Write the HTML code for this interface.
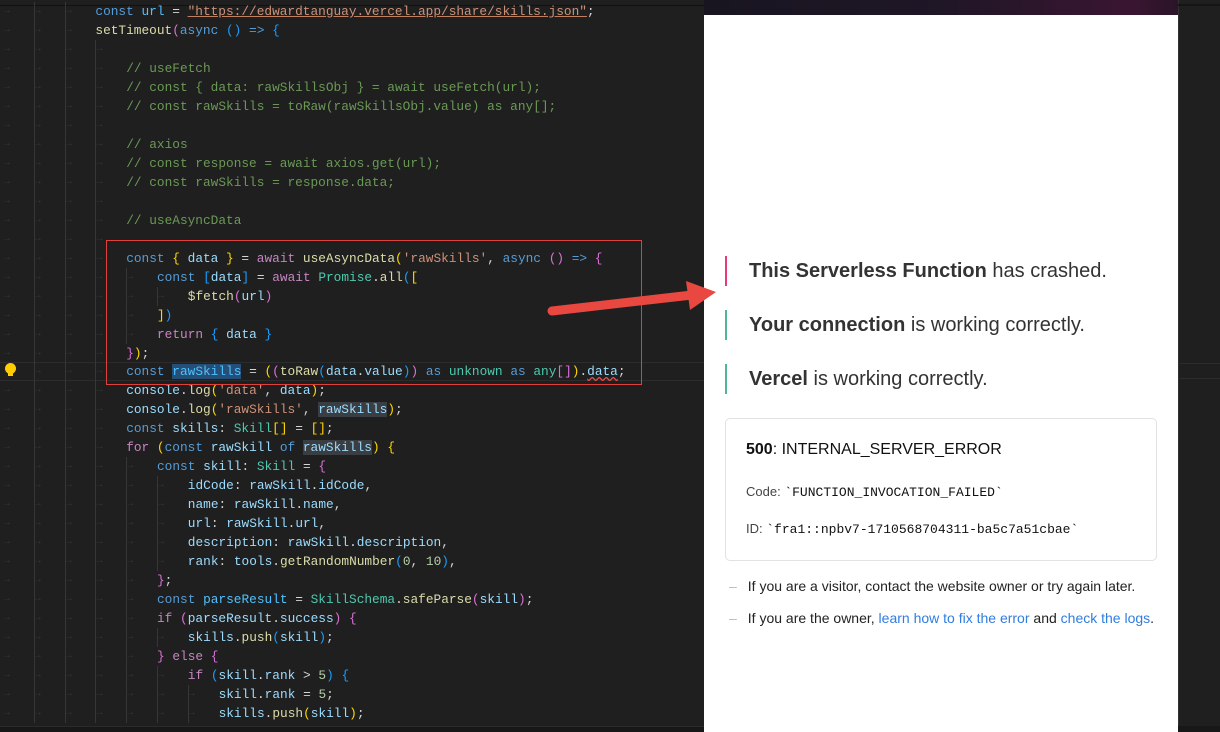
<!DOCTYPE html>
<html><head><meta charset="utf-8"><style>
*{margin:0;padding:0;box-sizing:border-box}
body{width:1220px;height:732px;overflow:hidden;background:#1f1f1f;position:relative;font-family:"Liberation Sans",sans-serif}
#ed{position:absolute;left:0;top:0;width:704px;height:732px;background:#1f1f1f;overflow:hidden}
.l{position:absolute;left:3px;height:19px;line-height:19px;white-space:pre;font-family:"Liberation Mono",monospace;font-size:12.8px;color:#9cdcfe}
.l b{display:inline-block;width:30.8px;height:19px;vertical-align:top;font-weight:normal;color:#363636;font-size:10px;padding-left:1px}
.l b::before{content:"→"}
.l b+b{box-shadow:inset 1px 0 #363636}
.k{color:#569cd6}.f{color:#dcdcaa}.s{color:#ce9178}.c{color:#6a9955}.p{color:#c586c0}.t{color:#4ec9b0}.n{color:#b5cea8}.w{color:#d4d4d4}
.y{color:#ffd700}.m{color:#da70d6}.bl{color:#179fff}
.hl{background:#264f78}.hg{background:#3a3d41}
#br{position:absolute;left:704px;top:0;width:474px;height:732px;background:#fff}
#bar{position:absolute;left:0;top:0;width:474px;height:15px;background:linear-gradient(90deg,#181520,#1f1626 50%,#3a1532 90%,#2a1428)}
.msg{position:absolute;left:21px;height:30px;border-left:2px solid #50b59a;padding-left:22px;font-size:20px;line-height:30px;color:#333}
.box{position:absolute;left:21px;top:418px;width:432px;height:143px;border:1px solid #e2e2e2;border-radius:5px}
.mono{font-family:"Liberation Mono",monospace;font-size:13px;color:#111}
.li{position:absolute;left:25px;font-size:14px;color:#222}
.li i{font-style:normal;color:#bbb;margin-right:11px}
a{color:#2f7de1;text-decoration:none}
</style></head><body>
<div id="ed">
<div class="l" style="top:-17px"><b></b><span class="p">return</span> <span class="k">new</span> <span class="t">Promise</span>&lt;<span class="t">Skill</span>[]&gt;((<span>resolve</span>, <span>reject</span>) <span class="k">=&gt;</span> {</div>
<div style="position:absolute;left:0;top:5px;width:704px;height:1px;background:#111"></div>
<div class="l" style="top:2px"><b></b><b></b><b></b><span class="k">const</span> <span style="color:#4fc1ff">url</span> <span class="w">=</span> <span class="s" style="text-decoration:underline;text-decoration-color:#c08060">"https://edwardtanguay.vercel.app/share/skills.json"</span><span class="w">;</span></div>
<div class="l" style="top:21px"><b></b><b></b><b></b><span class="f">setTimeout</span><span class="m">(</span><span class="k">async</span> <span class="bl">()</span> <span class="k">=&gt;</span> <span class="bl">{</span></div>
<div class="l" style="top:40px"><b></b><b></b><b></b><b style="width:1px"></b></div>
<div class="l" style="top:59px"><b></b><b></b><b></b><b></b><span class="c">// useFetch</span></div>
<div class="l" style="top:78px"><b></b><b></b><b></b><b></b><span class="c">// const { data: rawSkillsObj } = await useFetch(url);</span></div>
<div class="l" style="top:97px"><b></b><b></b><b></b><b></b><span class="c">// const rawSkills = toRaw(rawSkillsObj.value) as any[];</span></div>
<div class="l" style="top:116px"><b></b><b></b><b></b><b style="width:1px"></b></div>
<div class="l" style="top:135px"><b></b><b></b><b></b><b></b><span class="c">// axios</span></div>
<div class="l" style="top:154px"><b></b><b></b><b></b><b></b><span class="c">// const response = await axios.get(url);</span></div>
<div class="l" style="top:173px"><b></b><b></b><b></b><b></b><span class="c">// const rawSkills = response.data;</span></div>
<div class="l" style="top:192px"><b></b><b></b><b></b><b style="width:1px"></b></div>
<div class="l" style="top:211px"><b></b><b></b><b></b><b></b><span class="c">// useAsyncData</span></div>
<div class="l" style="top:230px"><b></b><b></b><b></b><b style="width:1px"></b></div>
<div class="l" style="top:249px"><b></b><b></b><b></b><b></b><span class="k">const</span> <span class="y">{</span> data <span class="y">}</span> <span class="w">=</span> <span class="p">await</span> <span class="f">useAsyncData</span><span class="y">(</span><span class="s">'rawSkills'</span><span class="w">,</span> <span class="k">async</span> <span class="m">()</span> <span class="k">=&gt;</span> <span class="m">{</span></div>
<div class="l" style="top:268px"><b></b><b></b><b></b><b></b><b></b><span class="k">const</span> <span class="bl">[</span>data<span class="bl">]</span> <span class="w">=</span> <span class="p">await</span> <span class="t">Promise</span><span class="w">.</span><span class="f">all</span><span class="bl">(</span><span class="y">[</span></div>
<div class="l" style="top:287px"><b></b><b></b><b></b><b></b><b></b><b></b><span class="f">$fetch</span><span class="m">(</span>url<span class="m">)</span></div>
<div class="l" style="top:306px"><b></b><b></b><b></b><b></b><b></b><span class="y">]</span><span class="bl">)</span></div>
<div class="l" style="top:325px"><b></b><b></b><b></b><b></b><b></b><span class="p">return</span> <span class="bl">{</span> data <span class="bl">}</span></div>
<div class="l" style="top:344px"><b></b><b></b><b></b><b></b><span class="m">}</span><span class="y">)</span><span class="w">;</span></div>
<div style="position:absolute;left:0;top:362px;width:704px;height:19px;border-top:1px solid #2c2c2c;border-bottom:1px solid #2c2c2c"></div>
<div class="l" style="top:362px"><b></b><b></b><b></b><b></b><span class="k">const</span> <span class="hl" style="color:#4fc1ff">rawSkills</span> <span class="w">=</span> <span class="y">(</span><span class="m">(</span><span class="f">toRaw</span><span class="bl">(</span>data<span class="w">.</span>value<span class="bl">)</span><span class="m">)</span> <span class="k">as</span> <span class="t">unknown</span> <span class="k">as</span> <span class="t">any</span><span class="m">[]</span><span class="y">)</span><span class="w">.</span><span style="text-decoration:underline wavy #f14c4c">data</span><span class="w">;</span></div>
<div style="position:absolute;left:5px;top:363px;width:11px;height:11px;border-radius:50%;background:#ffcc00"></div>
<div style="position:absolute;left:8px;top:373px;width:5px;height:3px;background:#ffcc00"></div>
<div class="l" style="top:381px"><b></b><b></b><b></b><b></b><span>console</span><span class="w">.</span><span class="f">log</span><span class="y">(</span><span class="s">'data'</span><span class="w">,</span> data<span class="y">)</span><span class="w">;</span></div>
<div class="l" style="top:400px"><b></b><b></b><b></b><b></b><span>console</span><span class="w">.</span><span class="f">log</span><span class="y">(</span><span class="s">'rawSkills'</span><span class="w">,</span> <span class="hg">rawSkills</span><span class="y">)</span><span class="w">;</span></div>
<div class="l" style="top:419px"><b></b><b></b><b></b><b></b><span class="k">const</span> skills<span class="w">:</span> <span class="t">Skill</span><span class="y">[]</span> <span class="w">=</span> <span class="y">[]</span><span class="w">;</span></div>
<div class="l" style="top:438px"><b></b><b></b><b></b><b></b><span class="p">for</span> <span class="y">(</span><span class="k">const</span> rawSkill <span class="k">of</span> <span class="hg">rawSkills</span><span class="y">)</span> <span class="y">{</span></div>
<div class="l" style="top:457px"><b></b><b></b><b></b><b></b><b></b><span class="k">const</span> skill<span class="w">:</span> <span class="t">Skill</span> <span class="w">=</span> <span class="m">{</span></div>
<div class="l" style="top:476px"><b></b><b></b><b></b><b></b><b></b><b></b>idCode<span class="w">:</span> rawSkill<span class="w">.</span>idCode<span class="w">,</span></div>
<div class="l" style="top:495px"><b></b><b></b><b></b><b></b><b></b><b></b>name<span class="w">:</span> rawSkill<span class="w">.</span>name<span class="w">,</span></div>
<div class="l" style="top:514px"><b></b><b></b><b></b><b></b><b></b><b></b>url<span class="w">:</span> rawSkill<span class="w">.</span>url<span class="w">,</span></div>
<div class="l" style="top:533px"><b></b><b></b><b></b><b></b><b></b><b></b>description<span class="w">:</span> rawSkill<span class="w">.</span>description<span class="w">,</span></div>
<div class="l" style="top:552px"><b></b><b></b><b></b><b></b><b></b><b></b>rank<span class="w">:</span> tools<span class="w">.</span><span class="f">getRandomNumber</span><span class="bl">(</span><span class="n">0</span><span class="w">,</span> <span class="n">10</span><span class="bl">)</span><span class="w">,</span></div>
<div class="l" style="top:571px"><b></b><b></b><b></b><b></b><b></b><span class="m">}</span><span class="w">;</span></div>
<div class="l" style="top:590px"><b></b><b></b><b></b><b></b><b></b><span class="k">const</span> <span style="color:#4fc1ff">parseResult</span> <span class="w">=</span> <span class="t">SkillSchema</span><span class="w">.</span><span class="f">safeParse</span><span class="m">(</span>skill<span class="m">)</span><span class="w">;</span></div>
<div class="l" style="top:609px"><b></b><b></b><b></b><b></b><b></b><span class="p">if</span> <span class="m">(</span>parseResult<span class="w">.</span>success<span class="m">)</span> <span class="m">{</span></div>
<div class="l" style="top:628px"><b></b><b></b><b></b><b></b><b></b><b></b>skills<span class="w">.</span><span class="f">push</span><span class="bl">(</span>skill<span class="bl">)</span><span class="w">;</span></div>
<div class="l" style="top:647px"><b></b><b></b><b></b><b></b><b></b><span class="m">}</span> <span class="p">else</span> <span class="m">{</span></div>
<div class="l" style="top:666px"><b></b><b></b><b></b><b></b><b></b><b></b><span class="p">if</span> <span class="bl">(</span>skill<span class="w">.</span>rank <span class="w">&gt;</span> <span class="n">5</span><span class="bl">)</span> <span class="bl">{</span></div>
<div class="l" style="top:685px"><b></b><b></b><b></b><b></b><b></b><b></b><b></b>skill<span class="w">.</span>rank <span class="w">=</span> <span class="n">5</span><span class="w">;</span></div>
<div class="l" style="top:704px"><b></b><b></b><b></b><b></b><b></b><b></b><b></b>skills<span class="w">.</span><span class="f">push</span><span class="y">(</span>skill<span class="y">)</span><span class="w">;</span></div>
<div style="position:absolute;left:0;top:726px;width:704px;height:6px;background:#181818;border-top:1px solid #2b2b2b"></div>
<div style="position:absolute;left:106px;top:240px;width:536px;height:145px;border:1.5px solid #e0403c"></div>
</div>
<div style="position:absolute;left:1178px;top:0;width:42px;height:732px;background:#1f1f1f;border-left:1px solid #333"></div>
<div style="position:absolute;left:1178px;top:4px;width:42px;height:2px;background:#151515"></div>
<div style="position:absolute;left:1178px;top:363px;width:42px;height:1px;background:#2c2c2c"></div>
<div style="position:absolute;left:1178px;top:378px;width:42px;height:1px;background:#2c2c2c"></div>
<div style="position:absolute;left:1178px;top:726px;width:42px;height:6px;background:#181818"></div>
<div id="br">
<div id="bar"></div>
<div class="msg" style="top:256px;border-left-color:#e8397a"><b>This Serverless Function</b> has crashed.</div>
<div class="msg" style="top:310px"><b>Your connection</b> is working correctly.</div>
<div class="msg" style="top:364px"><b>Vercel</b> is working correctly.</div>
<div class="box">
<div style="position:absolute;left:20px;top:22px;font-size:16px;color:#111"><b>500</b>: INTERNAL_SERVER_ERROR</div>
<div style="position:absolute;left:20px;top:65px;font-size:13px;color:#444">Code: <span class="mono">`FUNCTION_INVOCATION_FAILED`</span></div>
<div style="position:absolute;left:20px;top:102px;font-size:13px;color:#444">ID: <span class="mono">`fra1::npbv7-1710568704311-ba5c7a51cbae`</span></div>
</div>
<div class="li" style="top:578px"><i>–</i>If you are a visitor, contact the website owner or try again later.</div>
<div class="li" style="top:610px"><i>–</i>If you are the owner, <a>learn how to fix the error</a> and <a>check the logs</a>.</div>
</div>
<svg style="position:absolute;left:0;top:0" width="1220" height="732">
<line x1="552" y1="311" x2="692" y2="295" stroke="#e8483f" stroke-width="9" stroke-linecap="round"/>
<polygon points="686,281 716,292 690,310" fill="#e8483f"/>
</svg>
</body></html>
